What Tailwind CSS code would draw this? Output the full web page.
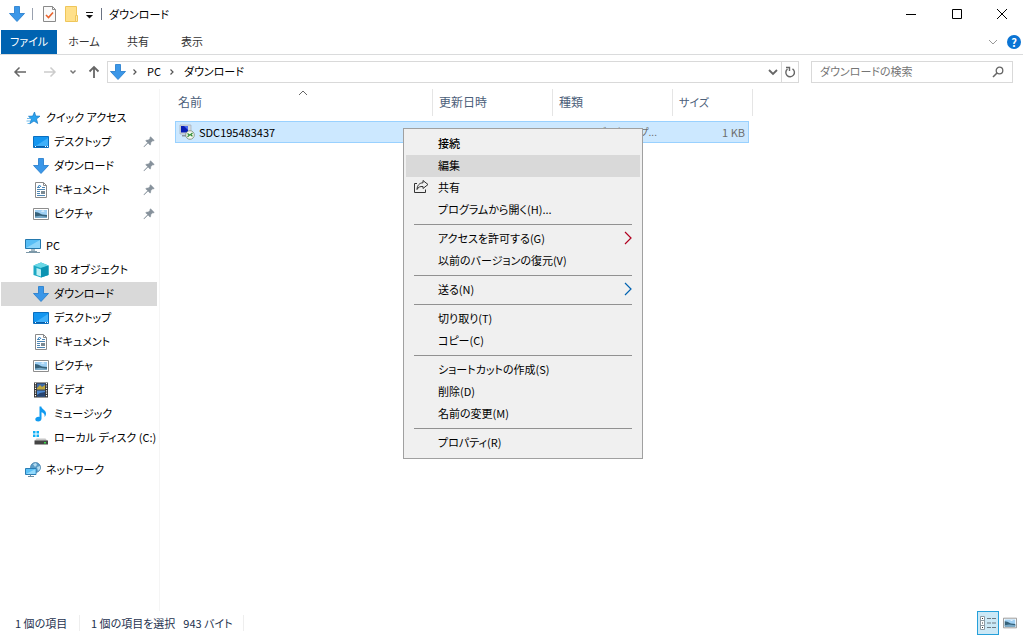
<!DOCTYPE html>
<html lang="ja">
<head>
    <meta charset="UTF-8">
    <meta name="viewport" content="width=device-width, initial-scale=1.0">
    <title>ダウンロード</title>
    <script src="https://cdn.jsdelivr.net/npm/@tailwindcss/browser@4"></script>
</head>
<body class="relative flex min-h-screen flex-col overflow-hidden bg-white font-['Noto_Sans_CJK_JP',sans-serif] text-[11px] leading-4 text-black [font-feature-settings:'palt']">

    <!-- Icons -->
    <svg class="hidden">
        <symbol id="down" viewBox="0 0 16 16">
            <path d="M5.500 .5h5v7h5L8 15.500.5 7.500h5z" fill="#3b97e8" stroke="#1f78cc" stroke-width=".8"/>
        </symbol>
        <symbol id="star" viewBox="0 0 16 16">
            <path d="M9.500 2l1.200 4 4.300.2-3.500 2.700 1.200 4.600-3.700-2.500-4.200 2.800 1.600-4.700L3.500 6.300l4.200-.2z" fill="#2ba3ee" stroke="#1478c4" stroke-width=".7"/>
            <path d="M2 8.500h4M1.500 11h4M2.500 13.500h3" stroke="#4aa9e6" stroke-width=".8"/>
        </symbol>
        <symbol id="desktop" viewBox="0 0 16 16">
            <path d="M.5 2.500h15v11H.5z" fill="#1496f0" stroke="#0a6fc0"/>
            <path d="M1 13L15 4v9z" fill="#3fb0fa"/>
            <path d="M1 12.500h14" stroke="#0a5ea8"/>
            <path d="M2 12.500h1M12 12.500h1M14 12.500h1" stroke="#fff"/>
        </symbol>
        <symbol id="doc" viewBox="0 0 16 16">
            <path d="M2.500 .5h8l3 3v12h-11z" fill="#fff" stroke="#8a8a8a"/>
            <path d="M10.500 .5v3h3" fill="none" stroke="#8a8a8a"/>
            <path d="M4 5.500h3M9 5.500h3M4 7.500h8M4 9.500h3M4 11.500h3M4 13.500h8" stroke="#4d86b4"/>
            <path d="M5 5l1.500-2L8 5" fill="none" stroke="#2c7fc4"/>
            <path d="M8 9h4v3H8z" fill="#7c8a92"/>
        </symbol>
        <symbol id="picture" viewBox="0 0 16 16">
            <path d="M.5 2.500h15v11H.5z" fill="#fff" stroke="#8d8d8d"/>
            <path d="M2 4h12v8H2z" fill="#9fd0f4"/>
            <path d="M2 6l3 .5 4 2 5 .5v3H2z" fill="#35617a"/>
            <path d="M2 10.500l5-.7 7 .9V12H2z" fill="#78a9c8"/>
            <path d="M8 5.500c1-1.500 3-1 3.500 0z" fill="#fff"/>
        </symbol>
        <symbol id="pc" viewBox="0 0 16 16">
            <path d="M.5 1.500h15v9H.5z" fill="#57bdf5" stroke="#2479ae"/>
            <path d="M1 10L15 2v8z" fill="#8bd5fb"/>
            <path d="M6 11h4v2H6z" fill="#a7bac5"/>
            <path d="M1 14.500h14M4 13.500h8" stroke="#7c98a8"/>
        </symbol>
        <symbol id="cube" viewBox="0 0 16 16">
            <path d="M.5 3.500L8 .5l7.500 3v9.500L8 15.500.5 13z" fill="#1ba8c4"/>
            <path d="M.5 3.500L8 .5l7.500 3L8 6z" fill="#6bd8e6"/>
            <path d="M8 6l7.500-2.500v9.500L8 15.500z" fill="#0b93b2"/>
            <path d="M3.500 6l4.500 1.500v7L3.500 13z" fill="#bdeff4"/>
        </symbol>
        <symbol id="video" viewBox="0 0 16 16">
            <path d="M1 .5h14v15H1z" fill="#333"/>
            <path d="M4 1.500h8v6H4z" fill="#3d69a8"/>
            <path d="M4 8.500h8v6H4z" fill="#4a86cf"/>
            <path d="M4 6l3-3 2 2 3-2v4.500H4z" fill="#c0a63c"/>
            <path d="M4 13l3-2 5-1v4.500H4z" fill="#26436f"/>
            <path d="M2.500 1v14M13.500 1v14" stroke="#fff" stroke-width="1.200" stroke-dasharray="1.200 1.200"/>
        </symbol>
        <symbol id="music" viewBox="0 0 16 16">
            <path d="M6.500 .5h1.800c.3 2.500 4.700 3.500 4.700 7 0 1.500-.6 2.700-1.400 3.500.5-3-1.200-4.300-3.100-4.800v6.300c0 1.800-1.500 3-3.300 3S2.300 14.700 2.300 13.300c0-1.700 2-2.900 4.200-2.400z" fill="#129bf0"/>
        </symbol>
        <symbol id="disk" viewBox="0 0 16 16">
            <path d="M0 1h2.500v2.500H0zM3.500 1H6v2.500H3.500zM0 4.500h2.500V7H0zM3.500 4.500H6V7H3.500z" fill="#12b0f5"/>
            <path d="M3.500 8.500h9l2 2.500H1.500z" fill="#c6c6c6"/>
            <path d="M1.500 10.500h13.500v4H1.500z" fill="#454545"/>
            <path d="M11 12h2v1.500h-2z" fill="#3bdc4a"/>
        </symbol>
        <symbol id="network" viewBox="0 0 16 16">
            <circle cx="10.500" cy="5.500" r="5" fill="#5b9cc7" stroke="#3b78a5" stroke-width=".7"/>
            <path d="M8 2l3-1 1 2-2 2zM12 5l3-1v3l-2 2z" fill="#b6dcf0"/>
            <path d="M.5 6.500h10.500v6H.5z" fill="#5bc1f7" stroke="#2a7db4"/>
            <path d="M1 12l9.500-5v5z" fill="#94dafc"/>
            <path d="M3 14.500h6M5.500 12.500v2" stroke="#6b8ea3"/>
        </symbol>
        <symbol id="pin" viewBox="0 0 16 16">
            <path d="M9.800 2l4.200 4.200-1.200.6-.6-.2-2.300 2.300c.3 1.200.1 2-.6 2.700L6.900 9.200 2.700 13.300l-.5.2.2-.5 4.100-4.200L4.200 6.500c.8-.7 1.700-.9 2.800-.6l2.300-2.300-.2-.7z" fill="#86919b" stroke="#86919b" stroke-width=".6"/>
        </symbol>
        <symbol id="share" viewBox="0 0 16 16">
            <path d="M4 4.500H1.500v9h11v-3" fill="none" stroke="#333"/>
            <path d="M10 1.500l5 4-5 4V7.500C7 7.300 5.300 8 4 10.500 4.200 6.500 6.500 3.800 10 3.800z" fill="none" stroke="#333"/>
        </symbol>
    </svg>

    <!-- Title bar -->
    <header class="flex h-7 items-center">
        <div class="flex flex-1 items-center pl-[9px]">
            <svg class="size-4"><use href="#down"/></svg>
            <span class="ml-[7px] h-3 w-px bg-gray-400"></span>
            <button aria-label="プロパティ" class="ml-[9px]">
                <svg class="size-4" viewBox="0 0 16 16">
                    <path d="M1.500 .5h9l3 3v12h-12z" fill="#fafafa" stroke="#8a8a8a"/>
                    <path d="M10.500 .5v3h3" fill="none" stroke="#8a8a8a"/>
                    <path d="M4 9l2.500 2.500L11 6.500" fill="none" stroke="#e8622c" stroke-width="1.600"/>
                </svg>
            </button>
            <button aria-label="新しいフォルダー" class="ml-[6px]">
                <svg class="size-4" viewBox="0 0 16 16">
                    <path d="M1.500 .5h11v15h-11z" fill="#ffe08a" stroke="#efc65a"/>
                    <path d="M11.500 9.500h2v6h-2z" fill="#ffe9a8" stroke="#efc65a"/>
                </svg>
            </button>
            <button aria-label="クイック アクセス ツール バーのカスタマイズ" class="ml-1">
                <svg class="size-3" viewBox="0 0 12 12"><path d="M2 4.500h7" stroke="#111"/><path d="M2 7h7L5.500 10.500z" fill="#111"/></svg>
            </button>
            <span class="ml-[5px] h-3 w-px bg-gray-500"></span>
            <h1 class="ml-[7px]">ダウンロード</h1>
        </div>
        <button aria-label="最小化" class="flex h-7 w-[46px] items-center justify-center"><svg class="size-3" viewBox="0 0 12 12"><path d="M1 6.500h10" stroke="#000"/></svg></button>
        <button aria-label="最大化" class="flex h-7 w-[46px] items-center justify-center"><svg class="size-3" viewBox="0 0 12 12"><path d="M1.500 1.500h9v9h-9z" fill="none" stroke="#000"/></svg></button>
        <button aria-label="閉じる" class="flex h-7 w-[43px] items-center justify-center"><svg class="size-3" viewBox="0 0 12 12"><path d="M1 1l10 10M11 1L1 11" stroke="#000"/></svg></button>
    </header>

    <!-- Ribbon tabs -->
    <nav class="flex h-[27px] items-center border-b border-[#dadbdc] pt-[2px] pb-[1px] pl-px text-[#333]">
        <button class="h-6 w-14 bg-[#0063b1] pb-[2px] text-white">ファイル</button>
        <button class="h-6 w-[54px] pb-[2px]">ホーム</button>
        <button class="h-6 w-[54px] pb-[2px]">共有</button>
        <button class="h-6 w-[54px] pb-[2px]">表示</button>
        <button aria-label="リボンの展開" class="ml-auto"><svg class="size-3" viewBox="0 0 12 12"><path d="M2 4l4 4 4-4" fill="none" stroke="#999"/></svg></button>
        <button aria-label="ヘルプ" class="mr-[2px] ml-2 flex size-[14px] items-center justify-center rounded-full bg-[#0a74d4] font-bold text-white">?</button>
    </nav>

    <!-- Address bar -->
    <div class="flex h-[34px] items-center pr-[10px] pl-3">
        <button aria-label="戻る"><svg class="size-4" viewBox="0 0 16 16"><path d="M14 8H3M7.500 3.500L3 8l4.500 4.500" fill="none" stroke="#666" stroke-width="1.500"/></svg></button>
        <button aria-label="進む" class="ml-[14px]"><svg class="size-4" viewBox="0 0 16 16"><path d="M2 8h11M8.500 3.500L13 8l-4.500 4.500" fill="none" stroke="#ccc" stroke-width="1.500"/></svg></button>
        <button aria-label="最近表示した場所" class="ml-[11px]"><svg class="size-2" viewBox="0 0 8 8"><path d="M1.500 2.500L4 5l2.500-2.500" fill="none" stroke="#777" stroke-width="1.500"/></svg></button>
        <button aria-label="上へ" class="ml-[9px]"><svg class="size-4" viewBox="0 0 16 16"><path d="M8 14V3M3.500 7.500L8 3l4.500 4.500" fill="none" stroke="#666" stroke-width="1.800"/></svg></button>
        <div class="ml-[5px] flex h-[22px] flex-1 items-center border border-[#d9d9d9] pl-[2px]">
            <svg class="size-4"><use href="#down"/></svg>
            <svg class="ml-[5px] size-2" viewBox="0 0 8 8"><path d="M2.500 1.500L5 4 2.500 6.500" fill="none" stroke="#555" stroke-width="1.200"/></svg>
            <button class="ml-2 pb-[2px]">PC</button>
            <svg class="ml-[7px] size-2" viewBox="0 0 8 8"><path d="M2.500 1.500L5 4 2.500 6.500" fill="none" stroke="#555" stroke-width="1.200"/></svg>
            <button class="ml-2 pb-[2px]">ダウンロード</button>
            <button aria-label="以前の場所" class="mr-[2px] ml-auto"><svg class="size-3" viewBox="0 0 12 12"><path d="M2 4l4 4 4-4" fill="none" stroke="#666" stroke-width="1.800"/></svg></button>
            <button aria-label="最新の情報に更新" class="flex h-full w-[17px] items-center justify-center border-l border-[#d9d9d9]"><svg class="size-3" viewBox="0 0 12 12"><path d="M8.500 2.800A4.300 4.300 0 1 1 3.500 3M2 1.500h3.500V5" fill="none" stroke="#666" stroke-width="1.400"/></svg></button>
        </div>
        <label class="ml-3 flex h-[22px] w-[202px] items-center border border-[#d9d9d9] pr-2 pl-2">
            <input type="text" aria-label="ダウンロードの検索" placeholder="ダウンロードの検索" class="min-w-0 flex-1 pb-[2px] outline-none placeholder:text-[#757575]">
            <svg class="size-3" viewBox="0 0 12 12"><circle cx="7.500" cy="4.500" r="3.300" fill="none" stroke="#666" stroke-width="1.300"/><path d="M5 7L1 11" stroke="#666" stroke-width="1.600"/></svg>
        </label>
    </div>

    <main class="flex flex-1">
        <aside class="w-40 shrink-0 border-r border-[#f5f5f5] pt-[17px] pr-[2px] pl-px">
            <ul id="quick-access"></ul>
            <ul id="this-pc" class="mt-2"></ul>
            <ul id="network-list" class="mt-2"></ul>
        </aside>

        <section class="flex-1 pl-[15px]">
            <table class="w-[578px] table-fixed border-separate border-spacing-0">
                <colgroup>
                    <col class="w-[258px]">
                    <col class="w-[120px]">
                    <col class="w-[120px]">
                    <col class="w-[76px]">
                    <col class="w-1">
                </colgroup>
                <thead class="text-left text-[12px] text-[#4c607a]">
                    <tr>
                        <th class="p-0 pb-[5px] font-normal">
                            <div class="relative flex h-[27px] items-center border-r border-[#e5e5e5] pb-[2px] pl-[3px]">
                                名前
                                <svg class="absolute top-0 left-[122px] h-2 w-3" viewBox="0 0 12 8"><path d="M2 6l4-4 4 4" fill="none" stroke="#666"/></svg>
                            </div>
                        </th>
                        <th class="p-0 pb-[5px] font-normal"><div class="flex h-[27px] items-center border-r border-[#e5e5e5] pb-[2px] pl-[6px]">更新日時</div></th>
                        <th class="p-0 pb-[5px] font-normal"><div class="flex h-[27px] items-center border-r border-[#e5e5e5] pb-[2px] pl-[6px]">種類</div></th>
                        <th colspan="2" class="p-0 pb-[5px] text-[11px] font-normal"><div class="flex h-[27px] items-center border-r border-[#e5e5e5] pb-[2px] pl-[6px]">サイズ</div></th>
                    </tr>
                </thead>
                <tbody>
                    <tr class="text-[#6d6d6d]">
                        <td class="h-[22px] border-y border-l border-[#99d1ff] bg-[#cce8ff] p-0 pl-[3px] text-black">
                            <div class="flex items-center gap-1">
                                <svg class="size-4" viewBox="0 0 16 16">
                                    <path d="M1 1h11v9H1z" fill="#d6dce2" stroke="#9aa3ab" stroke-width=".6"/>
                                    <path d="M2 2h7v6.500H2z" fill="#0a1fb4"/>
                                    <path d="M5 2h4v4z" fill="#4c6cf0"/>
                                    <path d="M3 11h5v1.500H3z" fill="#8d969e"/>
                                    <circle cx="11" cy="11" r="4.300" fill="#f3f7f0" stroke="#7b8a78" stroke-width=".8"/>
                                    <path d="M8.500 9.500l2 1.500-2 1.700M13.500 9l-2 1.700 2 1.500" fill="none" stroke="#2c8a30" stroke-width="1.200"/>
                                </svg>
                                SDC195483437
                            </div>
                        </td>
                        <td class="border-y border-[#99d1ff] bg-[#cce8ff] p-0"></td>
                        <td class="border-y border-[#99d1ff] bg-[#cce8ff] p-0 pl-[6px] text-[10px] whitespace-nowrap">リモート デスクトップ...</td>
                        <td class="border-y border-r border-[#99d1ff] bg-[#cce8ff] p-0 pr-[3px] text-right">1 KB</td>
                    </tr>
                </tbody>
            </table>
        </section>
    </main>

    <!-- Status bar -->
    <footer class="flex h-6 items-center pr-[6px] pl-[15px] text-[#1e3250]">
        <span class="w-[65px] border-r border-[#eee]">1 個の項目</span>
        <span class="pl-[11px]">1 個の項目を選択</span>
        <span class="border-r border-[#eee] pr-[10px] pl-2">943 バイト</span>
        <button aria-label="詳細" class="ml-auto flex h-6 w-[22px] items-center justify-center border border-[#26a0da] bg-[#cbe8f6]">
            <svg class="size-4" viewBox="0 0 16 16">
                <path d="M.5 1.500h4v13h-4zM.5 5.500h4M.5 10.500h4" fill="#fff" stroke="#8d9aa3"/>
                <path d="M2 3.500h1M2 8h1M2 12.500h1" stroke="#333"/>
                <path d="M7 3.500h4M12 3.500h4M7 8h4M12 8h4M7 12.500h4M12 12.500h4" stroke="#6c7a83"/>
            </svg>
        </button>
        <button aria-label="大アイコン" class="ml-1"><svg class="size-[14px]"><use href="#picture"/></svg></button>
    </footer>

    <!-- Context menu -->
    <div id="context-menu" role="menu" class="absolute top-32 left-[403px] w-60 border border-[#a0a0a0] bg-[#f0f0f0] px-[2px] py-1"></div>

    <script>
        const quickAccess = [
            { icon: "star", name: "クイック アクセス", root: true },
            { icon: "desktop", name: "デスクトップ", pinned: true },
            { icon: "down", name: "ダウンロード", pinned: true },
            { icon: "doc", name: "ドキュメント", pinned: true },
            { icon: "picture", name: "ピクチャ", pinned: true }
        ];

        const thisPc = [
            { icon: "pc", name: "PC", root: true },
            { icon: "cube", name: "3D オブジェクト" },
            { icon: "down", name: "ダウンロード", selected: true },
            { icon: "desktop", name: "デスクトップ" },
            { icon: "doc", name: "ドキュメント" },
            { icon: "picture", name: "ピクチャ" },
            { icon: "video", name: "ビデオ" },
            { icon: "music", name: "ミュージック" },
            { icon: "disk", name: "ローカル ディスク (C:)" }
        ];

        const network = [{ icon: "network", name: "ネットワーク", root: true }];

        // null is a separator
        const menu = [
            { name: "接続", bold: true },
            { name: "編集", active: true },
            { name: "共有", icon: "share" },
            { name: "プログラムから開く(H)..." },
            null,
            { name: "アクセスを許可する(G)", arrow: "#b00020" },
            { name: "以前のバージョンの復元(V)" },
            null,
            { name: "送る(N)", arrow: "#0063b1" },
            null,
            { name: "切り取り(T)" },
            { name: "コピー(C)" },
            null,
            { name: "ショートカットの作成(S)" },
            { name: "削除(D)" },
            { name: "名前の変更(M)" },
            null,
            { name: "プロパティ(R)" }
        ];

        function renderTree(id, items) {
            document.getElementById(id).innerHTML = items.map(item => `
                <li class="${item.selected ? 'bg-[#d9d9d9]' : ''}">
                    <a href="#" class="flex h-6 items-center ${item.root ? 'pl-6' : 'pl-8'}">
                        <svg class="size-4 shrink-0"><use href="#${item.icon}"/></svg>
                        <span class="ml-[5px] pb-[2px] whitespace-nowrap">${item.name}</span>
                        ${item.pinned ? '<svg class="mr-[1px] ml-auto size-[14px]"><use href="#pin"/></svg>' : ''}
                    </a>
                </li>
            `).join("");
        }

        function renderMenu() {
            document.getElementById("context-menu").innerHTML = menu.map(item => item ? `
                <button role="menuitem" class="flex h-[22px] w-full items-center pr-[6px] pb-[2px] pl-[7px] ${item.active ? 'bg-[#d9d9d9]' : ''} ${item.bold ? 'font-medium' : ''}">
                    <svg class="mr-[9px] size-4">${item.icon ? `<use href="#${item.icon}"/>` : ''}</svg>
                    ${item.name}
                    ${item.arrow ? `<svg class="ml-auto h-4 w-3" viewBox="0 0 12 16"><path d="M3 2l6 6-6 6" fill="none" stroke="${item.arrow}" stroke-width="1.200"/></svg>` : ''}
                </button>
            ` : '<hr class="mx-2 my-[3px] border-[#919191]">').join("");
        }

        renderTree("quick-access", quickAccess);
        renderTree("this-pc", thisPc);
        renderTree("network-list", network);
        renderMenu();
    </script>
</body>
</html>
